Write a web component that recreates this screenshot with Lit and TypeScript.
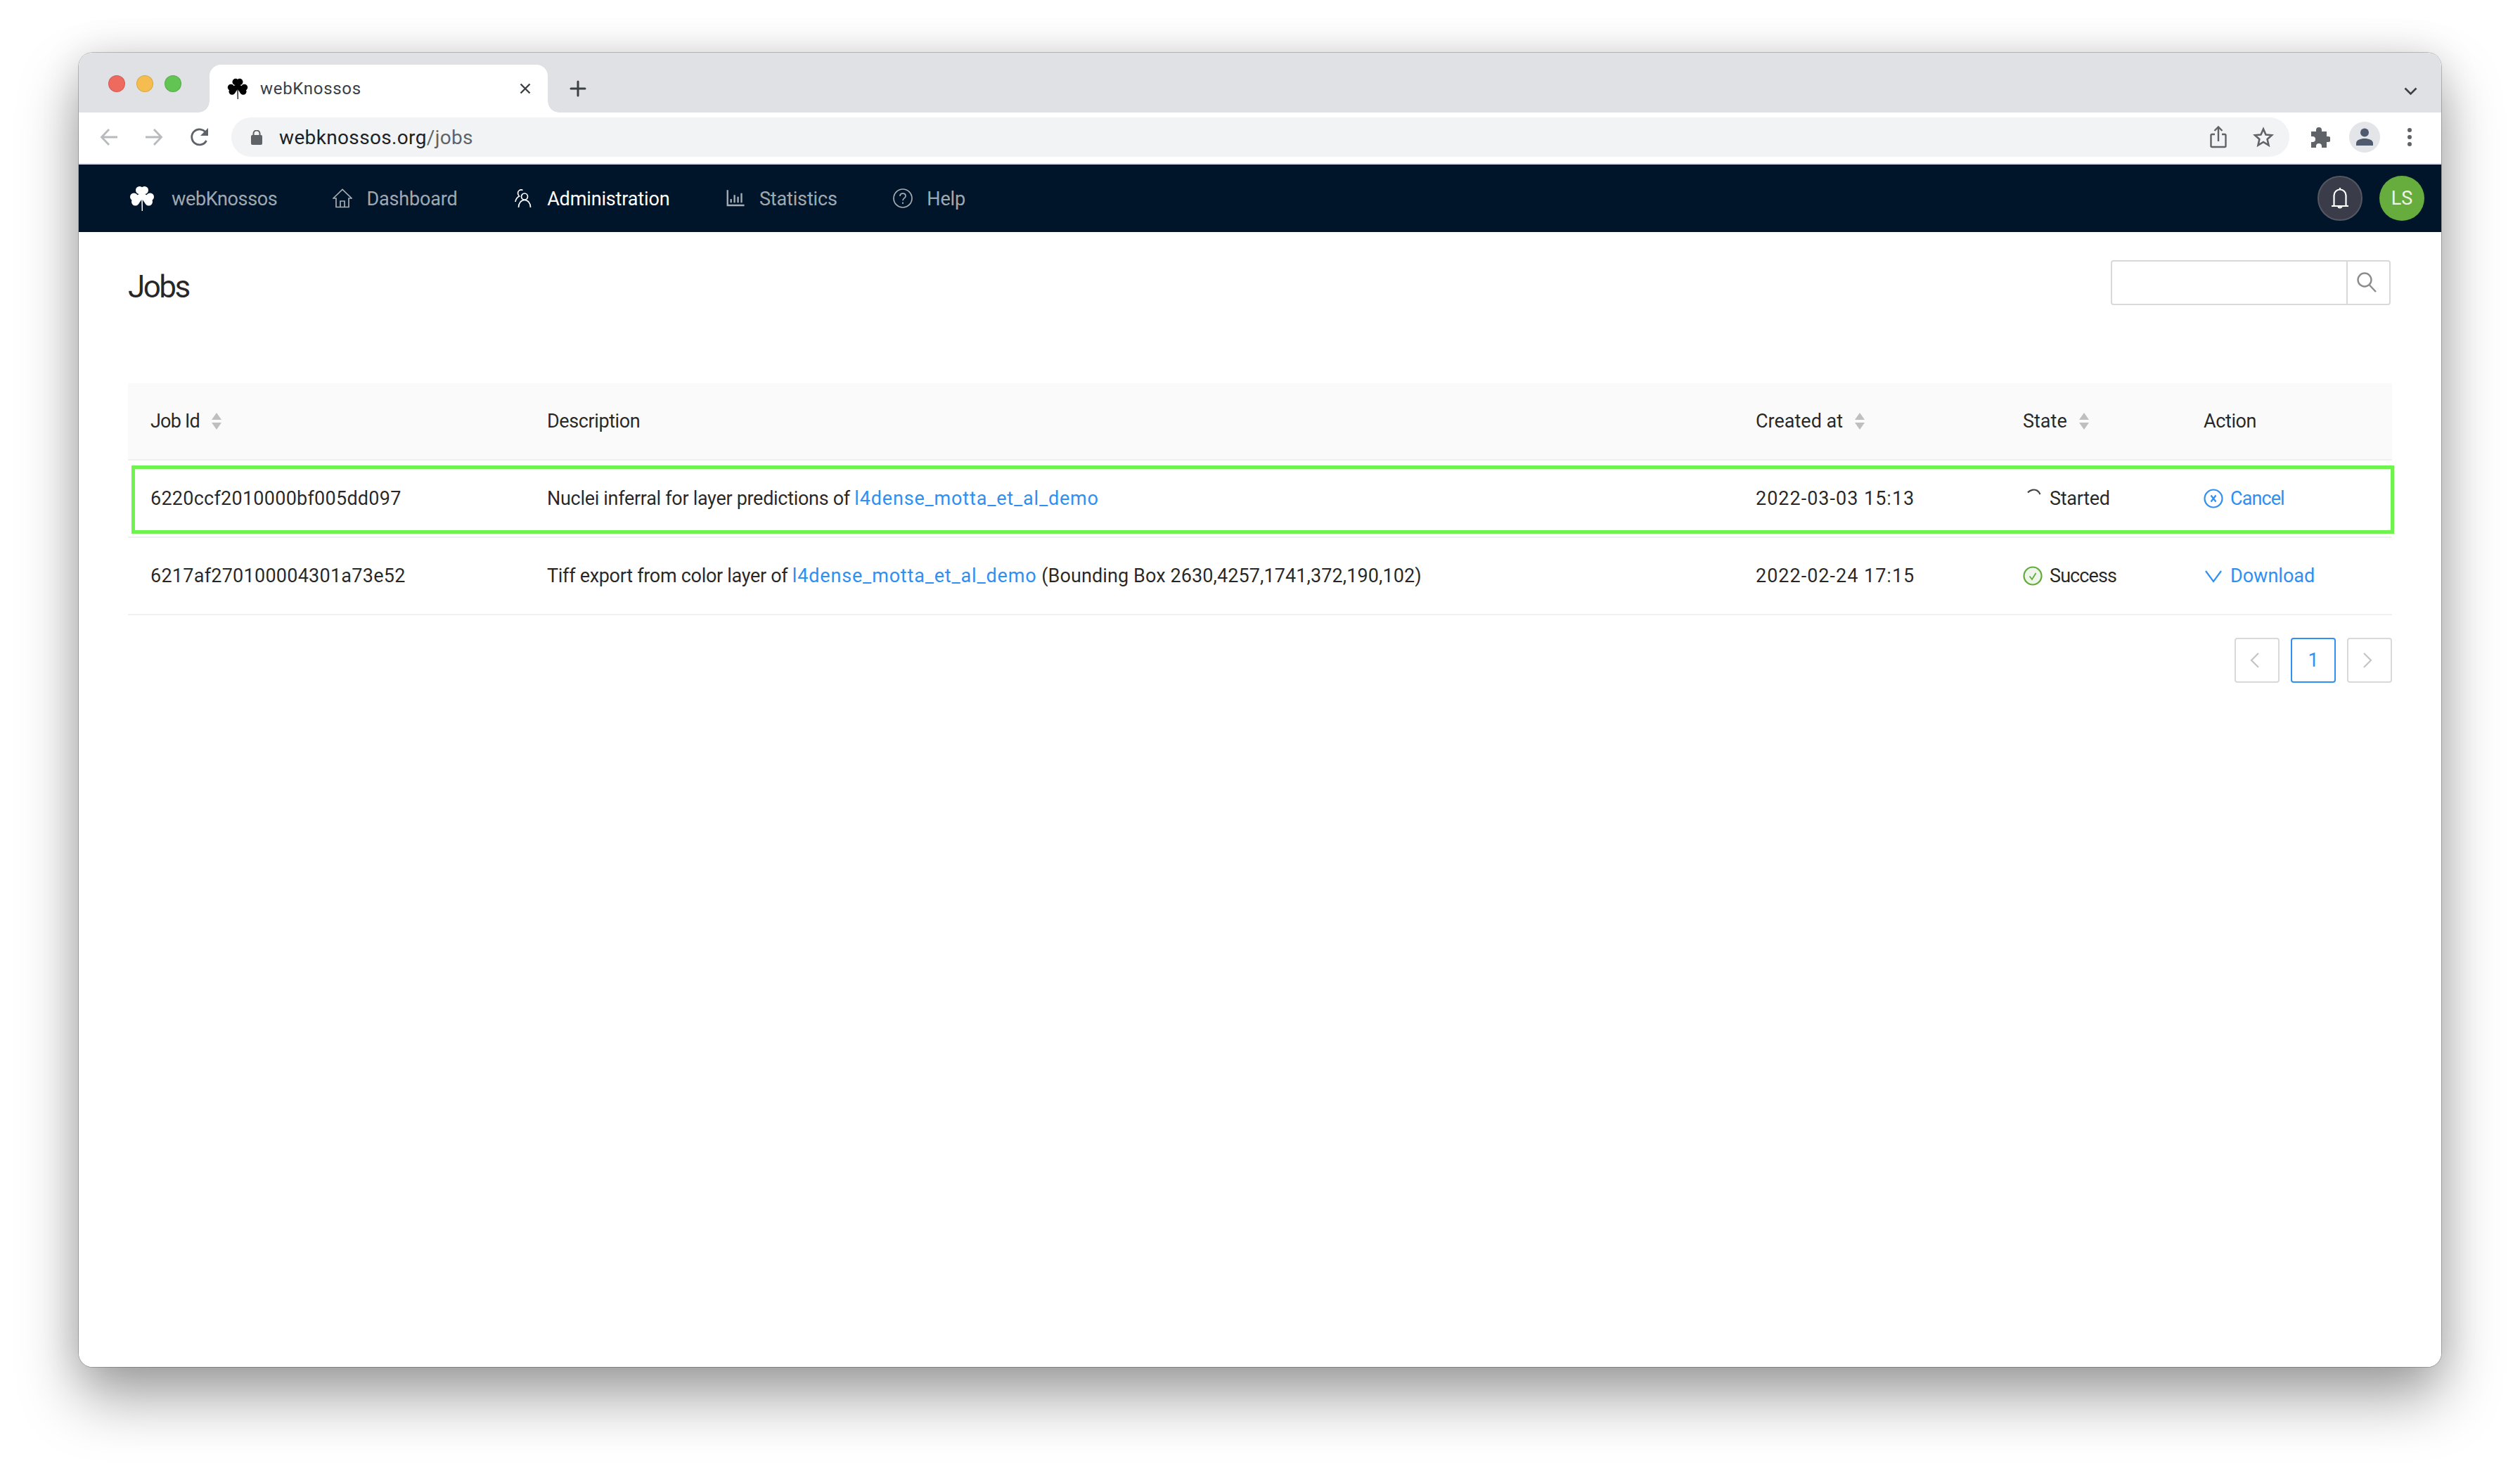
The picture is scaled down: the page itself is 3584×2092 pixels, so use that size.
import { LitElement, html, css, svg } from 'lit';
import { customElement } from 'lit/decorators.js';

const clover = (size: number, color: string) => html`
  <svg class="clover" width=${size} height=${size} viewBox="0 0 36 36" fill=${color}>
    <circle cx="14.5" cy="6.5" r="5.5"></circle>
    <circle cx="21.5" cy="6.5" r="5.5"></circle>
    <path d="M18 6 L12 15 L18 20 L24 15 Z"></path>
    <circle cx="6.5" cy="16" r="5.5"></circle>
    <circle cx="8.5" cy="23" r="5.5"></circle>
    <path d="M6 16 L14 12 L18 19 L13 26 Z"></path>
    <circle cx="29.5" cy="16" r="5.5"></circle>
    <circle cx="27.5" cy="23" r="5.5"></circle>
    <path d="M30 16 L22 12 L18 19 L23 26 Z"></path>
    <path d="M17.2 18 H18.8 L19 36 H17.6 Z"></path>
  </svg>
`;

const navIcons = {
  home: svg`<path d="M1 14 14 1.500 27 14h-4v12.500H5V14zM11 26.500V18h6v8.500" />`,
  team: svg`<circle cx="16" cy="11.5" r="4.5" /><path d="M7.500 27c0-6 3.500-10.500 8.500-10.500s8.500 4.500 8.500 10.500M13.500 2.500c-3.500-1.500-7 .5-7 4 0 1.500.5 3 2 4.500C5.500 12.500 3.500 15.500 3 19" />`,
  help: svg`<circle cx="14" cy="14" r="13" /><path d="M10 11c0-2.300 1.700-3.800 4-3.800s4 1.500 4 3.500c0 3.300-4 3-4 6.500" /><path d="M14 19.500v2.500" />`,
};

const sorter = html`
  <svg class="sorter" width="16" height="24" viewBox="0 0 16 24" fill="#bfbfbf">
    <path d="M8 0 15 10H1Z"></path>
    <path d="M1 14H15L8 24Z"></path>
  </svg>
`;

@customElement('app-root')
export class AppRoot extends LitElement {
  static styles = css`
    :host {
      display: block;
      width: 3584px;
      height: 2092px;
      box-sizing: border-box;
      padding: 75px 112px 148px;
      background: #fff;
      overflow: hidden;
      font-family: Roboto, "Liberation Sans", sans-serif;
    }

    .window {
      height: 100%;
      display: flex;
      flex-direction: column;
      border-radius: 20px;
      overflow: hidden;
      background: #fff;
    }

    .frame {
      height: 100%;
      border-radius: 20px;
      box-shadow: 0 0 0 1px rgba(0, 0, 0, 0.22), 0 44px 84px rgba(0, 0, 0, 0.36), 0 0 56px rgba(0, 0, 0, 0.12);
    }

    /* browser tab strip */
    .strip {
      height: 85px;
      flex: none;
      box-sizing: border-box;
      background: #dfe1e5;
      display: flex;
      align-items: flex-end;
      padding-left: 42px;
    }

    .lights {
      display: flex;
      gap: 16px;
      align-self: flex-start;
      margin-top: 32px;
      width: 144px;
    }

    .light {
      width: 24px;
      height: 24px;
      border-radius: 50%;
      box-sizing: border-box;
      border: 1px solid rgba(0, 0, 0, 0.12);
    }

    .tab {
      position: relative;
      width: 481px;
      height: 68px;
      box-sizing: border-box;
      padding: 0 24px 0 25px;
      background: #fff;
      border-radius: 16px 16px 0 0;
      display: flex;
      align-items: center;
      font-size: 24px;
      color: #3c4043;
    }

    .tab::before,
    .tab::after {
      content: '';
      position: absolute;
      bottom: 0;
      width: 16px;
      height: 16px;
    }

    .tab::before {
      left: -16px;
      background: radial-gradient(circle at 0 0, #dfe1e5 15.500px, #fff 16px);
    }

    .tab::after {
      right: -16px;
      background: radial-gradient(circle at 100% 0, #dfe1e5 15.500px, #fff 16px);
    }

    .tab-title {
      margin-left: 17px;
      flex: 1;
      letter-spacing: 0.7px;
    }

    .new-tab {
      margin: 0 0 22px 31px;
      display: flex;
    }

    .strip-end {
      margin: 0 34px 24px auto;
      display: flex;
    }

    /* browser toolbar */
    .toolbar {
      height: 74px;
      flex: none;
      box-sizing: border-box;
      padding: 8px 0 10px 30px;
      background: #fff;
      border-bottom: 2px solid #dfe1e5;
      display: flex;
      align-items: center;
    }

    .nav-btn {
      width: 64px;
      flex: none;
      display: flex;
      justify-content: flex-start;
    }

    .omnibox {
      width: 928px;
      flex: 1;
      height: 56px;
      margin-left: -5px;
      border-radius: 28px;
      background: #f1f3f4;
      display: flex;
      align-items: center;
      padding: 0 22px 0 28px;
      font-size: 28px;
      color: #202124;
    }

    .url {
      margin-left: 24px;
      flex: 1;
      letter-spacing: 0.35px;
    }

    .url span {
      color: #5f6368;
    }

    .omni-icons {
      display: flex;
      gap: 37px;
      align-items: center;
    }

    .tool-icons {
      width: 216px;
      flex: none;
      box-sizing: border-box;
      display: flex;
      align-items: center;
      padding-left: 29px;
    }

    .profile {
      width: 44px;
      height: 44px;
      margin-left: 27px;
      border-radius: 50%;
      background: #e3e5e9;
      display: flex;
      align-items: center;
      justify-content: center;
    }

    .kebab {
      margin-left: 39px;
      display: flex;
      flex-direction: column;
      gap: 4px;
    }

    .kebab i {
      width: 6px;
      height: 6px;
      border-radius: 50%;
      background: #5f6368;
    }

    /* app navbar */
    .navbar {
      height: 96px;
      flex: none;
      background: #001529;
      display: flex;
      align-items: center;
      padding: 0 24px 0 72px;
      font-size: 27px;
      color: rgba(255, 255, 255, 0.65);
    }

    .nav-text {
      position: relative;
      top: 1px;
      letter-spacing: -0.15px;
    }

    .brand {
      display: flex;
      align-items: center;
      gap: 24px;
      margin-right: 79px;
    }

    .brand .nav-text {
      letter-spacing: -0.35px;
    }

    .nav-item {
      display: flex;
      align-items: center;
      gap: 20px;
      margin-right: 79.500px;
    }

    .nav-item.active {
      color: #fff;
    }

    .nav-item svg {
      fill: none;
      stroke: currentColor;
      stroke-width: 1.700;
    }

    .nav-item svg.solid {
      fill: currentColor;
      stroke: none;
    }

    .nav-end {
      margin-left: auto;
      display: flex;
      gap: 24px;
    }

    .bell,
    .user {
      width: 64px;
      height: 64px;
      border-radius: 50%;
      box-sizing: border-box;
      display: flex;
      align-items: center;
      justify-content: center;
    }

    .bell {
      background: #3a3d49;
      border: 2px solid #555762;
    }

    .user {
      background: #66ad3e;
      color: #eef3ea;
    }

    /* page content */
    .content {
      flex: 1;
      padding: 40px 70px 0;
      color: rgba(0, 0, 0, 0.85);
      font-size: 27px;
    }

    .page-head {
      display: flex;
      justify-content: space-between;
      align-items: flex-start;
      height: 175px;
    }

    h1 {
      margin: 10px 0 0;
      font-size: 44px;
      font-weight: 400;
      line-height: 56px;
      letter-spacing: -2.500px;
    }

    .search {
      width: 398px;
      height: 64px;
      margin-right: 2px;
      box-sizing: border-box;
      border: 2px solid #d9d9d9;
      border-radius: 4px;
      display: flex;
      justify-content: flex-end;
    }

    .search-btn {
      width: 61px;
      box-sizing: border-box;
      padding-right: 6px;
      border-left: 2px solid #d9d9d9;
      display: flex;
      align-items: center;
      justify-content: center;
    }

    .row {
      position: relative;
      display: grid;
      grid-template-columns: 564px 1719px 380px 257px 300px;
      align-items: center;
      height: 108px;
      border-bottom: 2px solid #f0f0f0;
    }

    .row.head {
      background: #fafafa;
    }

    .cell {
      padding-left: 32px;
      display: flex;
      align-items: center;
    }

    .text {
      white-space: pre;
    }

    .ls-job { letter-spacing: -0.8px; }
    .ls-desc { letter-spacing: -0.4px; }
    .ls-head { letter-spacing: -0.4px; }
    .ls-id { letter-spacing: 0.25px; }
    .ls-lead { letter-spacing: -0.3px; }
    .ls-link { letter-spacing: 0.83px; }
    .ls-tail { letter-spacing: 0.1px; }
    .ls-date { letter-spacing: 1px; }
    .ls-started { letter-spacing: -0.3px; }
    .ls-success { letter-spacing: -0.9px; }
    .ls-cancel { letter-spacing: -0.9px; }

    .sorter {
      margin-left: 16px;
    }

    .highlight {
      position: absolute;
      left: 5px;
      right: -3px;
      top: 7px;
      bottom: 4px;
      border: 5px solid #6ef34f;
    }

    a {
      color: #2f8ff2;
      text-decoration: none;
    }

    .state-icon {
      width: 28px;
      margin-right: 10px;
      display: flex;
    }

    .action-icon {
      margin-right: 10px;
      display: flex;
    }

    .pager {
      display: flex;
      justify-content: flex-end;
      gap: 16px;
      margin-top: 32px;
    }

    .page {
      width: 64px;
      height: 64px;
      box-sizing: border-box;
      border: 2px solid #d9d9d9;
      border-radius: 4px;
      display: flex;
      align-items: center;
      justify-content: center;
    }

    .page svg {
      margin-right: 6px;
    }

    .page.current {
      border-color: #2f8ff2;
      color: #2f8ff2;
    }
  `;

  render() {
    return html`
      <div class="frame">
        <div class="window">
          <div class="strip">
            <div class="lights">
              <div class="light" style="background:#ee6a5f"></div>
              <div class="light" style="background:#f5bd4f"></div>
              <div class="light" style="background:#61c453"></div>
            </div>
            <div class="tab">
              ${clover(30, '#000')}
              <span class="tab-title">webKnossos</span>
              <svg width="16" height="16" viewBox="0 0 16 16" stroke="#3c4043" stroke-width="2.400"><path d="M1.500 1.500l13 13M14.500 1.500l-13 13"></path></svg>
            </div>
            <div class="new-tab">
              <svg width="24" height="24" viewBox="0 0 24 24" stroke="#3c4043" stroke-width="3" stroke-linecap="round"><path d="M12 2v20M2 12h20"></path></svg>
            </div>
            <div class="strip-end">
              <svg width="19" height="12" viewBox="0 0 19 12" fill="none" stroke="#3c4043" stroke-width="2.600"><path d="M1.500 1.500l8 8 8-8"></path></svg>
            </div>
          </div>

          <div class="toolbar">
            <div class="nav-btn">
              <svg width="26" height="26" viewBox="0 0 26 26" fill="none" stroke="#b8babd" stroke-width="2.800"><path d="M25 13H3M13 2 2.500 13 13 24"></path></svg>
            </div>
            <div class="nav-btn">
              <svg width="26" height="26" viewBox="0 0 26 26" fill="none" stroke="#b8babd" stroke-width="2.800"><path d="M1 13h22M13 2l10.500 11L13 24"></path></svg>
            </div>
            <div class="nav-btn">
              <svg width="28" height="28" viewBox="0 0 28 28" fill="none" stroke="#5f6368" stroke-width="2.800"><path d="M23.500 19a11 11 0 1 1-.5-11"></path><path d="M26 1v11H15z" fill="#5f6368" stroke="none"></path></svg>
            </div>
            <div class="omnibox">
              <svg width="16" height="21" viewBox="0 0 16 21" fill="#5f6368"><rect y="7" width="16" height="14" rx="2"></rect><path d="M3.500 8V5a4.500 4.500 0 0 1 9 0v3" fill="none" stroke="#5f6368" stroke-width="2"></path></svg>
              <div class="url">webknossos.org<span>/jobs</span></div>
              <div class="omni-icons">
                <svg width="24" height="32" viewBox="0 0 24 32" fill="none" stroke="#5f6368" stroke-width="2.400"><path d="M7 12H3a1.500 1.500 0 0 0-1.500 1.500v15A1.500 1.500 0 0 0 3 30h18a1.500 1.500 0 0 0 1.500-1.500v-15A1.500 1.500 0 0 0 21 12h-4M12 22V2M6.500 7 12 1.500 17.500 7"></path></svg>
                <svg width="30" height="30" viewBox="0 0 30 30" fill="none" stroke="#5f6368" stroke-width="2.600"><path d="M15 3.500l3.500 8 8.500.8-6.400 5.700 1.900 8.500L15 22l-7.500 4.500 1.900-8.500L3 12.300l8.500-.8z"></path></svg>
              </div>
            </div>
            <div class="tool-icons">
              <svg width="29" height="29" viewBox="0 0 29 29" fill="#5f6368"><path d="M2 6h7V4a4 4 0 0 1 8 0v2h7v7h2a4 4 0 0 1 0 8h-2v8h-7v-2a4 4 0 0 0-8 0v2H2v-8h2a4 4 0 0 0 0-8H2z"></path></svg>
              <div class="profile">
                <svg width="26" height="26" viewBox="0 0 26 26" fill="#505a6e"><circle cx="13" cy="6.500" r="6"></circle><path d="M1 25v-3c0-5 6-7 12-7s12 2 12 7v3z"></path></svg>
              </div>
              <div class="kebab"><i></i><i></i><i></i></div>
            </div>
          </div>

          <div class="navbar">
            <div class="brand">${clover(36, '#fff')}<span class="nav-text">webKnossos</span></div>
            <div class="nav-item">
              <svg width="28" height="28" viewBox="0 0 28 28">${navIcons.home}</svg>
              <span class="nav-text">Dashboard</span>
            </div>
            <div class="nav-item active">
              <svg width="28" height="28" viewBox="0 0 28 28">${navIcons.team}</svg>
              <span class="nav-text">Administration</span>
            </div>
            <div class="nav-item">
              <svg class="solid" width="28" height="28" viewBox="80 130 860 780">
                <path d="M888 792H200V168c0-4.400-3.600-8-8-8h-56c-4.400 0-8 3.600-8 8v688c0 4.400 3.600 8 8 8h752c4.400 0 8-3.600 8-8v-56c0-4.400-3.600-8-8-8zm-600-80h56c4.400 0 8-3.600 8-8V560c0-4.400-3.600-8-8-8h-56c-4.400 0-8 3.600-8 8v144c0 4.400 3.600 8 8 8zm152 0h56c4.400 0 8-3.600 8-8V384c0-4.400-3.600-8-8-8h-56c-4.400 0-8 3.600-8 8v320c0 4.400 3.600 8 8 8zm152 0h56c4.400 0 8-3.600 8-8V462c0-4.400-3.600-8-8-8h-56c-4.400 0-8 3.600-8 8v242c0 4.400 3.600 8 8 8zm152 0h56c4.400 0 8-3.600 8-8V304c0-4.400-3.600-8-8-8h-56c-4.400 0-8 3.600-8 8v400c0 4.400 3.600 8 8 8z"></path>
              </svg>
              <span class="nav-text">Statistics</span>
            </div>
            <div class="nav-item">
              <svg width="28" height="28" viewBox="0 0 28 28">${navIcons.help}</svg>
              <span class="nav-text">Help</span>
            </div>
            <div class="nav-end">
              <div class="bell">
                <svg width="26" height="34" viewBox="0 0 26 34" fill="none" stroke="#fff" stroke-width="2.200"><path d="M1 28h24M4.500 28V13a8.500 8.500 0 0 1 17 0v15M13 2v2.500M10.500 28a2.500 2.500 0 0 0 5 0"></path></svg>
              </div>
              <div class="user">LS</div>
            </div>
          </div>

          <div class="content">
            <div class="page-head">
              <h1>Jobs</h1>
              <div class="search">
                <div class="search-btn">
                  <svg width="28" height="30" viewBox="0 0 28 30" fill="none" stroke="#8c8c8c" stroke-width="2.400"><circle cx="11" cy="11" r="9.500"></circle><path d="M18 18.500 27 28"></path></svg>
                </div>
              </div>
            </div>

            <div class="row head">
              <div class="cell"><span class="ls-job">Job Id</span>${sorter}</div>
              <div class="cell"><span class="ls-desc">Description</span></div>
              <div class="cell"><span>Created at</span>${sorter}</div>
              <div class="cell"><span>State</span>${sorter}</div>
              <div class="cell"><span class="ls-head">Action</span></div>
            </div>

            <div class="row">
              <div class="cell"><span class="ls-id">6220ccf2010000bf005dd097</span></div>
              <div class="cell text"><span class="ls-lead">Nuclei inferral for layer predictions of </span><a class="ls-link">l4dense_motta_et_al_demo</a></div>
              <div class="cell"><span class="ls-date">2022-03-03 15:13</span></div>
              <div class="cell">
                <span class="state-icon"><svg width="28" height="28" viewBox="0 0 28 28" fill="none" stroke="#444" stroke-width="2.200"><path d="M7 5.500A11 11 0 0 1 20 2.500 11 11 0 0 1 24.500 8"></path></svg></span>
                <span class="ls-started">Started</span>
              </div>
              <div class="cell">
                <span class="action-icon"><svg width="28" height="28" viewBox="0 0 28 28" fill="none" stroke="#2f8ff2" stroke-width="2.200"><circle cx="14" cy="14" r="12.500"></circle><path d="M10.500 9.500l7 9M17.500 9.500l-7 9"></path></svg></span>
                <a class="ls-cancel">Cancel</a>
              </div>
              <div class="highlight"></div>
            </div>

            <div class="row">
              <div class="cell"><span class="ls-id">6217af270100004301a73e52</span></div>
              <div class="cell text"><span class="ls-lead">Tiff export from color layer of </span><a class="ls-link">l4dense_motta_et_al_demo</a><span class="ls-tail"> (Bounding Box 2630,4257,1741,372,190,102)</span></div>
              <div class="cell"><span class="ls-date">2022-02-24 17:15</span></div>
              <div class="cell">
                <span class="state-icon"><svg width="28" height="28" viewBox="0 0 28 28" fill="#eef5ea" stroke="#61ab3a" stroke-width="2.200"><circle cx="14" cy="14" r="12.500"></circle><path d="M9.500 14.500l3.500 4.500 5.500-9" fill="none" stroke-width="1.800"></path></svg></span>
                <span class="ls-success">Success</span>
              </div>
              <div class="cell">
                <span class="action-icon"><svg width="28" height="28" viewBox="0 0 28 28" fill="none" stroke="#2f8ff2" stroke-width="2.200"><path d="M3 7l11 15L25 7"></path></svg></span>
                <a>Download</a>
              </div>
            </div>

            <div class="pager">
              <div class="page"><svg width="14" height="22" viewBox="0 0 14 22" fill="none" stroke="#c4c4c4" stroke-width="2.200"><path d="M12 1 2 11l10 10"></path></svg></div>
              <div class="page current">1</div>
              <div class="page"><svg width="14" height="22" viewBox="0 0 14 22" fill="none" stroke="#c4c4c4" stroke-width="2.200"><path d="M2 1l10 10L2 21"></path></svg></div>
            </div>
          </div>
        </div>
      </div>
    `;
  }
}
